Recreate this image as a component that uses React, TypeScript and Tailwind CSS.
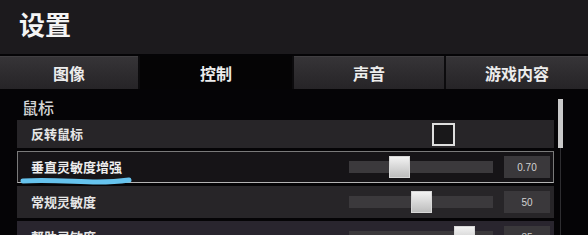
import React from "react";

const tabs = [
  { label: "图像", w: "w-[138px]", active: false },
  { label: "控制", w: "w-[152px]", active: true },
  { label: "声音", w: "w-[150px]", active: false },
  { label: "游戏内容", w: "flex-1", active: false },
];

function Slider({ thumb, value }: { thumb: string; value: string }) {
  return (
    <>
      <div className="relative w-[144px] h-[12px] bg-[#3b393c]">
        <div
          className={`absolute top-[-5px] ${thumb} w-[21px] h-[22px] bg-gradient-to-b from-[#f2f2f2] to-[#bdbdbd] border border-[#d8d8d8]`}
        />
      </div>
      <div className="ml-[11px] w-[46px] h-[22px] bg-[#3a383b] flex items-center justify-center text-[10px] text-[#d2d2d2] font-['Liberation_Sans',sans-serif]">
        {value}
      </div>
    </>
  );
}

export default function App() {
  return (
    <div className="w-[588px] h-[235px] overflow-hidden bg-[#050406] font-['Noto_Sans_CJK_SC',sans-serif]">
      {/* header */}
      <div className="h-[54px] bg-[#1c1a1d] pl-[19px] pt-[11px]">
        <span className="text-[26px] leading-none font-bold text-[#f4f4f4]">设置</span>
      </div>

      {/* tabs */}
      <div className="mt-[2px] h-[33px] flex gap-[2px] bg-[#0c0b0d]">
        {tabs.map((t) => (
          <div
            key={t.label}
            className={`${t.w} flex items-center justify-center text-[16px] font-bold text-[#ececec] ${
              t.active
                ? "bg-[#050405]"
                : "bg-gradient-to-b from-[#363437] to-[#262427] border-t border-[#403e41]"
            }`}
          >
            {t.label}
          </div>
        ))}
      </div>

      {/* content */}
      <div className="flex">
        <div className="relative ml-[17px] w-[537px] pt-[6px]">
          <div className="h-[25px] leading-[25px] pl-[5px] text-[16px] font-medium text-[#d4d4d4]">鼠标</div>

          <div className="flex flex-col gap-[3px]">
            <div className="h-[28px] bg-[#272528] flex items-center">
              <span className="w-[415px] pl-[14px] text-[13px] font-bold text-[#e6e6e6]">反转鼠标</span>
              <div className="w-[23px] h-[23px] border-2 border-[#dedede] bg-[#19181a]" />
            </div>

            <div className="h-[32px] bg-[#161417] border border-[#7a7a7a] border-b-[#b4b4b4] flex items-center">
              <span className="w-[331px] pl-[13px] text-[13px] font-bold text-[#ececec]">垂直灵敏度增强</span>
              <Slider thumb="left-[40px]" value="0.70" />
            </div>

            <div className="h-[32px] bg-[#272528] flex items-center">
              <span className="w-[332px] pl-[14px] text-[13px] font-bold text-[#e6e6e6]">常规灵敏度</span>
              <Slider thumb="left-[62px]" value="50" />
            </div>

            <div className="h-[32px] bg-[#29252e] flex items-center">
              <span className="w-[332px] pl-[14px] text-[13px] font-bold text-[#e6e6e6]">帮助灵敏度</span>
              <Slider thumb="left-[105px]" value="35" />
            </div>
          </div>

          {/* hand-drawn highlight stroke */}
          <svg className="absolute left-[0px] top-[84px]" width="120" height="14" viewBox="0 0 120 14">
            <path
              d="M6 8 C 30 6, 60 9, 80 9 C 95 9, 105 8, 112 7"
              stroke="#66c3ee"
              strokeWidth="5"
              strokeLinecap="round"
              fill="none"
            />
          </svg>
        </div>

        {/* scrollbar */}
        <div className="ml-[4px] mt-[10px] w-[5px] flex flex-col items-center">
          <div className="w-[5px] h-[49px] bg-[#c9c9c9]" />
          <div className="w-[1px] h-[100px] bg-[#2e2d30]" />
        </div>
      </div>
    </div>
  );
}
